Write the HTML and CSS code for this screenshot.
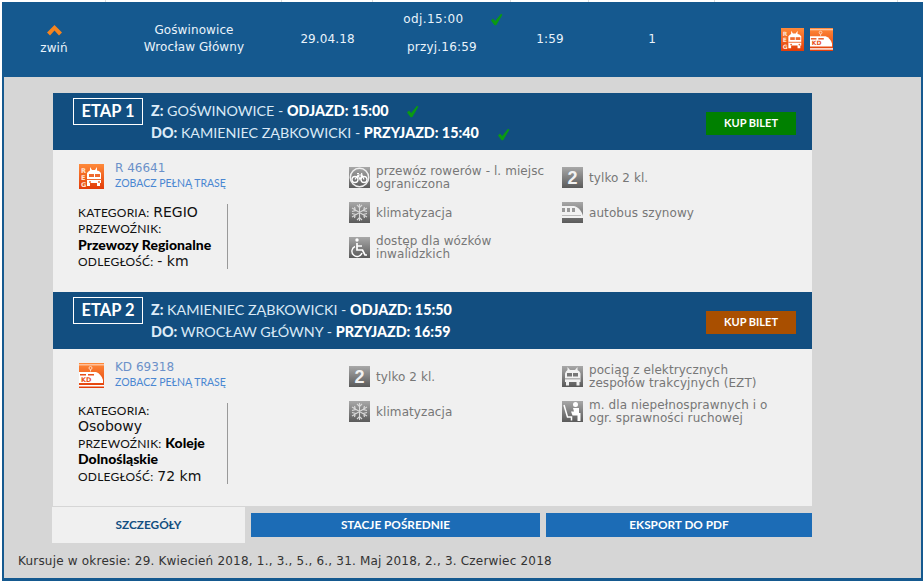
FILE: index.html
```html
<!DOCTYPE html>
<html lang="pl">
<head>
<meta charset="utf-8">
<title>Połączenie</title>
<link rel="stylesheet" href="styles.css">
</head>
<body>
<svg class="defs" width="0" height="0" aria-hidden="true">
  <defs>
    <linearGradient id="gg" x1="0" y1="0" x2="0" y2="1"><stop offset="0" stop-color="#a8a8a8"/><stop offset="1" stop-color="#5a5a5a"/></linearGradient>
    <linearGradient id="og" x1="0" y1="0" x2="0" y2="1"><stop offset="0" stop-color="#ff8a3a"/><stop offset="1" stop-color="#e23c08"/></linearGradient>
    <symbol id="check" viewBox="0 0 13 13"><path d="M1 7.500l2-2 2.200 2.600L11 .8l1.400 1-6.200 10.400H4.600z" fill="#0a9a12"/></symbol>
    <symbol id="reg" viewBox="0 0 25 25">
      <rect width="25" height="25" fill="url(#og)"/>
      <text x="2" y="8.500" class="ic-t">R</text><text x="2" y="15.500" class="ic-t">E</text><text x="2" y="22.500" class="ic-t">G</text>
      <path d="M11 3l2 3h3l2-3v3.500l2 .5 2 2v10h-1v3h-3v-3h-7v3H8v-3H8V9l2-2 1-.5z" fill="#fff"/>
      <rect x="10" y="10" width="5" height="3" fill="#ee6a30"/><rect x="16" y="10" width="5" height="3" fill="#ee6a30"/>
      <rect x="8" y="15" width="15" height="1" fill="#ee6a30"/>
      <circle cx="11" cy="18" r="1" fill="#ee6a30"/><circle cx="20" cy="18" r="1" fill="#ee6a30"/>
    </symbol>
    <symbol id="kd" viewBox="0 0 25 25">
      <rect width="25" height="25" fill="url(#og)"/>
      <rect y="1" width="25" height="1.500" fill="#ffc09a"/>
      <circle cx="11.500" cy="5" r="1.500" fill="none" stroke="#ffd8c0"/>
      <path d="M11.500 6.500v2" stroke="#ffd8c0"/>
      <path d="M0 9h17c3 1 6 4 7 8v3H0z" fill="#fff"/>
      <rect x="1" y="11" width="6" height="1.500" fill="#e8501a"/><rect x="9" y="11" width="6" height="1.500" fill="#e8501a"/>
      <text x="2" y="18.500" class="ic-k">KD</text>
      <rect y="22" width="25" height="1.500" fill="#fff"/>
    </symbol>
    <symbol id="ic-bike" viewBox="0 0 21 21">
      <rect width="21" height="21" fill="url(#gg)"/>
      <circle cx="10.500" cy="10.500" r="9.200" fill="none" stroke="#f0f0f0" stroke-width="1.500"/>
      <circle cx="6" cy="12.500" r="3" fill="none" stroke="#fff" stroke-width="1.300"/><circle cx="15" cy="12.500" r="3" fill="none" stroke="#fff" stroke-width="1.300"/>
      <path d="M6 12.500l3-4.500h4l2 4.500M9 8l2 4.500L13 8M8 6.500h2M12.500 6l.5 2" fill="none" stroke="#fff" stroke-width="1.200"/>
    </symbol>
    <symbol id="ic-snow" viewBox="0 0 21 21">
      <rect width="21" height="21" fill="url(#gg)"/>
      <path d="M10.500 2v17M3 6l15 9M18 6L3 15M8 3l2.500 2.500L13 3M8 18l2.500-2.500L13 18M3 9.500l3.500-1-1-3.500M18 11.500l-3.500 1 1 3.500M18 9.500l-3.500-1 1-3.500M3 11.500l3.500 1-1 3.500" fill="none" stroke="#d8d8d8" stroke-width="1.100"/>
    </symbol>
    <symbol id="ic-wheel" viewBox="0 0 21 21">
      <rect width="21" height="21" fill="url(#gg)"/>
      <circle cx="8" cy="3" r="1.700" fill="#fff"/>
      <path d="M8 6v7h5.500l2.500 5h2M8 9h5" fill="none" stroke="#fff" stroke-width="1.700"/>
      <path d="M6 9.500a5.200 5.200 0 1 0 7 6.500" fill="none" stroke="#fff" stroke-width="1.400"/>
    </symbol>
    <symbol id="ic-two" viewBox="0 0 21 21">
      <rect width="21" height="21" fill="url(#gg)"/>
      <text x="10.500" y="17" text-anchor="middle" class="ic-2">2</text>
    </symbol>
    <symbol id="ic-bus" viewBox="0 0 21 21">
      <rect width="21" height="21" fill="url(#gg)"/>
      <path d="M0 4h12c4 1 8 5 9 10v2H0z" fill="#f2f2f2"/>
      <path d="M0 6h3v4H0zm5 0h3v4H5zm5 0h3v4h-3z" fill="#999"/>
      <path d="M0 13h19v1H0z" fill="#bbb"/>
    </symbol>
    <symbol id="ic-ezt" viewBox="0 0 21 21">
      <rect width="21" height="21" fill="url(#gg)"/>
      <path d="M5.500 1l2.500 3h5l2.500-3v3l2 1.500 1 2V16h-1v3.500h-3V16H7v3.500H4V16H3V7.500l1-2 1.500-1.500z" fill="#f2f2f2"/>
      <path d="M5 7h5v3.500H5zM11 7h5v3.500h-5zM3 12.500h15v.8H3z" fill="#777"/>
    </symbol>
    <symbol id="ic-seat" viewBox="0 0 21 21">
      <rect width="21" height="21" fill="url(#gg)"/>
      <circle cx="13.500" cy="3.500" r="2.500" fill="#fff"/>
      <path d="M11 7h6v5h1.500v8h-3v-5.500H10.500L9 10.500h3z" fill="#fff"/>
      <path d="M2 4l3.500 12h4v3.500" fill="none" stroke="#fff" stroke-width="1.500"/>
    </symbol>
  </defs>
</svg>

<div class="strip">
  <span></span><span></span><span></span><span></span><span></span><span></span><span></span><span></span>
</div>

<div class="frame">
  <header class="summary">
    <div class="collapse">
      <svg class="chev" width="15" height="11" viewBox="0 0 15 11"><path d="M0 7.500L7.500 0 15 7.500 12 10.500 7.500 5.500 3 10.500z" fill="#f5841f"/></svg>
      <span>zwiń</span>
    </div>
    <div class="stations"><div>Goświnowice</div><div>Wrocław Główny</div></div>
    <div>29.04.18</div>
    <div class="times">
      <div class="odj"><span>odj.15:00</span><svg class="chk"><use href="#check"/></svg></div>
      <div>przyj.16:59</div>
    </div>
    <div>1:59</div>
    <div>1</div>
    <div class="carriers">
      <svg class="carrier"><use href="#reg"/></svg>
      <svg class="carrier"><use href="#kd"/></svg>
    </div>
    <div></div>
  </header>

  <main class="content">
    <div class="panel">
      <section class="stage-head">
        <div class="stage-no">ETAP 1</div>
        <div class="stage-route">
          <div><b class="lbl">Z:</b> GOŚWINOWICE - <b>ODJAZD: 15:00</b><svg class="chk chk-a"><use href="#check"/></svg></div>
          <div><b class="lbl">DO:</b> KAMIENIEC ZĄBKOWICKI - <b>PRZYJAZD: 15:40</b><svg class="chk chk-b"><use href="#check"/></svg></div>
        </div>
        <a class="buy buy-green">KUP BILET</a>
      </section>
      <section class="stage-body body-one">
        <div class="train">
          <div class="train-id">
            <svg class="train-ic"><use href="#reg"/></svg>
            <div><div class="train-no">R 46641</div><a class="route-link">ZOBACZ PEŁNĄ TRASĘ</a></div>
          </div>
          <div class="info">
            <div><span class="k">KATEGORIA:</span> <span class="v">REGIO</span></div>
            <div><span class="k">PRZEWOŹNIK:</span></div>
            <div><b class="op">Przewozy Regionalne</b></div>
            <div><span class="k">ODLEGŁOŚĆ:</span> <span class="v">- km</span></div>
          </div>
        </div>
        <div class="features">
          <div class="feat"><svg class="fi"><use href="#ic-bike"/></svg><span>przewóz rowerów - l. miejsc ograniczona</span></div>
          <div class="feat"><svg class="fi"><use href="#ic-two"/></svg><span class="one">tylko 2 kl.</span></div>
          <div class="feat"><svg class="fi"><use href="#ic-snow"/></svg><span class="one">klimatyzacja</span></div>
          <div class="feat"><svg class="fi"><use href="#ic-bus"/></svg><span class="one">autobus szynowy</span></div>
          <div class="feat"><svg class="fi"><use href="#ic-wheel"/></svg><span>dostęp dla wózków inwalidzkich</span></div>
        </div>
      </section>

      <section class="stage-head">
        <div class="stage-no">ETAP 2</div>
        <div class="stage-route">
          <div><b class="lbl">Z:</b> KAMIENIEC ZĄBKOWICKI - <b>ODJAZD: 15:50</b></div>
          <div><b class="lbl">DO:</b> WROCŁAW GŁÓWNY - <b>PRZYJAZD: 16:59</b></div>
        </div>
        <a class="buy buy-brown">KUP BILET</a>
      </section>
      <section class="stage-body body-two">
        <div class="train">
          <div class="train-id">
            <svg class="train-ic"><use href="#kd"/></svg>
            <div><div class="train-no">KD 69318</div><a class="route-link">ZOBACZ PEŁNĄ TRASĘ</a></div>
          </div>
          <div class="info">
            <div><span class="k">KATEGORIA:</span></div>
            <div><span class="v">Osobowy</span></div>
            <div><span class="k">PRZEWOŹNIK:</span> <b class="op">Koleje Dolnośląskie</b></div>
            <div><span class="k">ODLEGŁOŚĆ:</span> <span class="v">72 km</span></div>
          </div>
        </div>
        <div class="features">
          <div class="feat"><svg class="fi"><use href="#ic-two"/></svg><span class="one">tylko 2 kl.</span></div>
          <div class="feat"><svg class="fi"><use href="#ic-ezt"/></svg><span>pociąg z elektrycznych zespołów trakcyjnych (EZT)</span></div>
          <div class="feat"><svg class="fi"><use href="#ic-snow"/></svg><span class="one">klimatyzacja</span></div>
          <div class="feat"><svg class="fi"><use href="#ic-seat"/></svg><span>m. dla niepełnosprawnych i o ogr. sprawności ruchowej</span></div>
        </div>
      </section>
    </div>

    <nav class="tabs">
      <a class="tab tab-active">SZCZEGÓŁY</a>
      <a class="tab tab-wide">STACJE POŚREDNIE</a>
      <a class="tab tab-pdf">EKSPORT DO PDF</a>
    </nav>
    <p class="period">Kursuje w okresie: 29. Kwiecień 2018, 1., 3., 5., 6., 31. Maj 2018, 2., 3. Czerwiec 2018</p>
  </main>
</div>
</body>
</html>
```

FILE: styles.css
```css
* { box-sizing: border-box; }
html, body { margin: 0; padding: 0; }
body { background: #fff; font-family: "DejaVu Sans", Verdana, sans-serif; font-size: 12px; width: 923px; height: 581px; overflow: hidden; }
.defs { position: absolute; }
.ic-t { font: bold 6.5px "DejaVu Sans", sans-serif; fill: #ffe3d2; }
.ic-k { font: bold 6.5px "DejaVu Sans", sans-serif; fill: #e8501a; }
.ic-2 { font: bold 18px "Liberation Sans", sans-serif; fill: #f2f2f2; }

.strip, .summary { display: grid; grid-template-columns: 104px 176px 91px 138px 78px 126px 183px 25px; }
.strip { height: 2px; margin-left: 2px; }
.strip span { border-right: 1px solid #ddd; }
.strip span:last-child { border-right: 0; }

.frame { margin-left: 2px; width: 921px; height: 579px; background: #15598f; display: flex; flex-direction: column; padding: 0 2px 3px 0; }
.summary { height: 75px; padding-bottom: 2px; color: #e9f3fb; font-size: 12px; letter-spacing: .1px; text-align: center; align-items: center; }
.collapse { display: flex; flex-direction: column; align-items: center; gap: 5px; padding-top: 2px; }
.chev { display: block; }
.stations { line-height: 17px; }
.times { line-height: 28px; padding-bottom: 11px; letter-spacing: .2px; }
.odj { display: flex; justify-content: center; align-items: center; gap: 26px; padding-left: 22px; letter-spacing: .4px; }
.chk { width: 13px; height: 13px; display: inline-block; }
.carriers { display: flex; justify-content: center; gap: 6px; padding-top: 2px; }
.carrier { width: 23px; height: 23px; }

.content { flex: 1; margin-left: 2px; background: #d6d6d6; padding: 16px 0 0 49px; display: flex; flex-direction: column; }
.panel { width: 759px; background: #f0f0f0; }
.stage-head { height: 57px; background: #124e80; display: flex; align-items: flex-start; padding: 5px 16px 0 20px; color: #d9e9f6; font-family: Lato, sans-serif; font-size: 14.300px; }
.stage-no { width: 70px; height: 27px; border: 1px solid #fff; color: #fff; font-weight: 700; font-size: 16.500px; line-height: 25px; text-align: center; margin-right: 8px; flex: none; }
.stage-route { flex: 1; line-height: 22px; padding-top: 2px; }
.stage-route b { color: #fff; font-weight: 900; }
.stage-route .lbl { color: #dcebf7; }
.chk-a { margin-left: 17px; vertical-align: -2px; }
.chk-b { margin-left: 18px; vertical-align: -3px; }
.buy { width: 90px; height: 23px; margin-top: 14px; color: #fff; font-weight: 700; font-size: 11px; line-height: 22px; text-align: center; flex: none; }
.buy-green { background: #008000; }
.buy-brown { background: #a94f00; }

.stage-body { display: flex; padding: 14px 0 0 25px; }
.body-one { height: 142px; }
.body-two { height: 157px; }
.train { width: 271px; flex: none; }
.train-id { display: flex; gap: 11px; padding-left: 1px; height: 40px; }
.train-ic { width: 25px; height: 25px; }
.train-no { color: #6b90c9; font-size: 12px; line-height: 14px; margin-top: -3px; }
.route-link { display: block; color: #4a87d2; font-family: Lato, sans-serif; font-size: 10.500px; line-height: 14px; margin-top: 1px; }
.info { width: 150px; border-right: 1px solid #999; color: #111; font-family: "DejaVu Sans", sans-serif; line-height: 16.400px; }
.body-one .info { height: 65px; padding-top: 1px; }
.body-two .info { height: 81px; }
.k { font-family: Lato, sans-serif; font-size: 12px; letter-spacing: .2px; line-height: 1; }
.v { font-size: 14px; line-height: 1; }
.op { font-family: Lato, sans-serif; font-size: 14px; font-weight: 900; color: #000; line-height: 1; }

.features { display: grid; grid-template-columns: 213px 213px; grid-auto-rows: 35px; padding-top: 3px; align-content: start; }
.feat { display: flex; align-items: center; gap: 6px; height: 21px; color: #777; font-size: 12px; line-height: 13px; letter-spacing: .08px; }
.fi { width: 21px; height: 21px; flex: none; }
.feat span { width: 185px; }
.feat .one { padding-top: 2px; }

.tabs { display: flex; align-items: center; gap: 6px; width: 760px; margin: 1px 0 0 -1px; height: 36px; font-family: Lato, sans-serif; font-size: 11.800px; font-weight: 700; text-align: center; }
.tab { display: block; height: 24px; line-height: 24px; background: #1c6cb6; color: #fff; flex: none; }
.tab-active { width: 193px; height: 36px; line-height: 36px; background: #f0f0f0; color: #124e80; }
.tab-wide { width: 289px; }
.tab-pdf { width: 266px; }
.period { margin: 11px 0 0 -35px; color: #333; font-size: 12px; line-height: 14px; letter-spacing: .2px; }
```
